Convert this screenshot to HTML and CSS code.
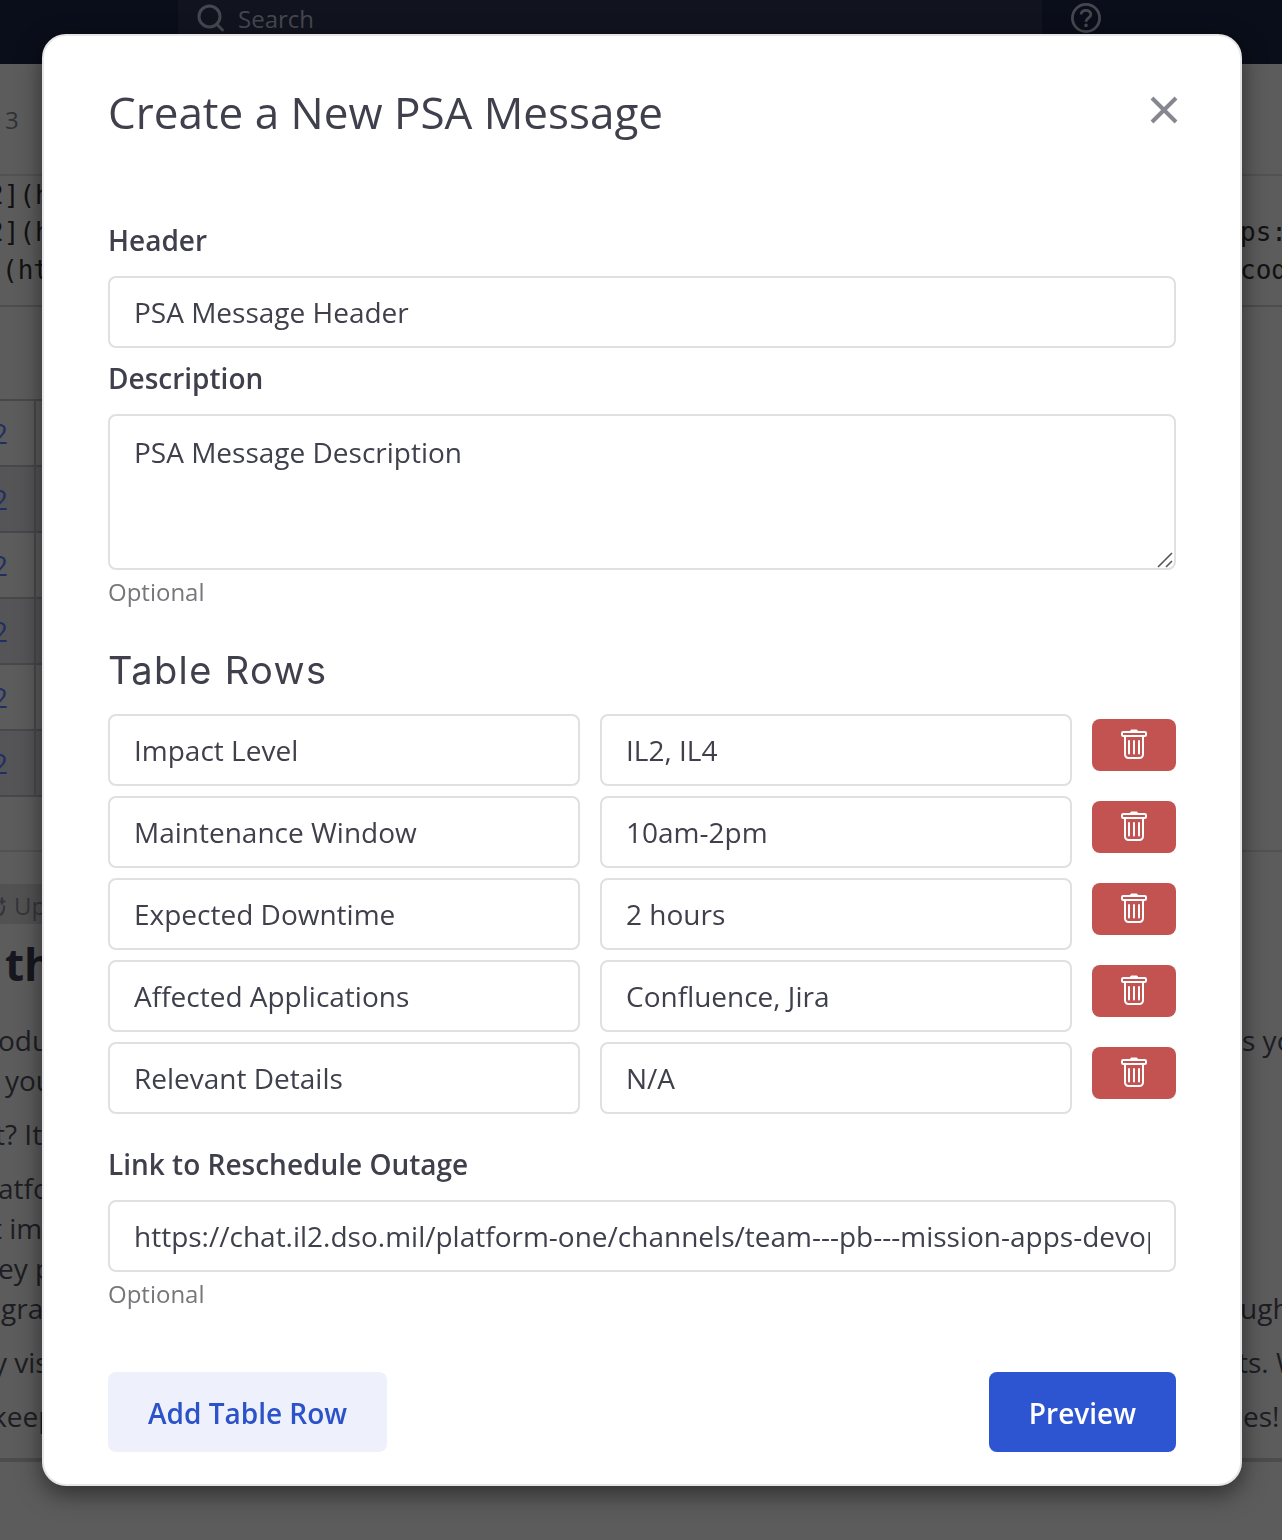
FILE: index.html
```html
<!DOCTYPE html>
<html lang="en">
<head>
    <meta charset="UTF-8">
    <meta name="viewport" content="width=device-width, initial-scale=1.0">
    <title>Create a New PSA Message</title>
    <link rel="stylesheet" href="styles.css">
</head>
<body>
    <div class="page">
        <header class="topbar">
            <div class="search">
                <svg width="30" height="30" viewBox="0 0 30 30" fill="none" stroke="currentColor" stroke-width="3" stroke-linecap="round">
                    <circle cx="12.5" cy="12.5" r="10.5"/>
                    <path d="M20 20.500l5.500 5.500"/>
                </svg>
                <span>Search</span>
            </div>
            <svg class="help" width="32" height="32" viewBox="0 0 32 32" fill="none" stroke="currentColor" stroke-width="2.8">
                <circle cx="16" cy="16" r="13.6"/>
                <path d="M11.2 12.6c0-2.6 2-4.2 4.8-4.2s4.8 1.7 4.8 4.1c0 3.4-4.8 3.3-4.8 7.3"/>
                <circle cx="16" cy="23.4" r="1.8" fill="currentColor" stroke="none"/>
            </svg>
        </header>

        <div class="count">3</div>

        <div class="source">
            <div class="line"><span class="out-12">2](h</span></div>
            <div class="line"><span class="out-12">2](h</span><span class="right">ps:</span></div>
            <div class="line"><span class="in-2">(ht</span><span class="right">cod</span></div>
        </div>

        <div class="table">
            <div class="tr"><a>2</a></div>
            <div class="tr"><a>2</a></div>
            <div class="tr"><a>2</a></div>
            <div class="tr"><a>2</a></div>
            <div class="tr"><a>2</a></div>
            <div class="tr"><a>2</a></div>
        </div>

        <div class="article">
            <div class="update">
                <svg width="12" height="26" viewBox="0 0 12 26" fill="none" stroke="currentColor" stroke-width="2.2">
                    <path d="M0 10.500h5.500M2 6.500v7M4 14.500c.3 4.500-1 8-4 9.500"/>
                </svg>
                <span>Up</span>
            </div>
            <h2>th</h2>
            <div class="text">
                <div class="line"><span class="out-2">odu</span><span class="right in-2">s yo</span></div>
                <div class="line"><span class="in-5">you</span></div>
            </div>
            <div class="text">
                <div class="line"><span class="out-5">t? It</span></div>
            </div>
            <div class="text">
                <div class="line"><span class="out-2">atfo</span></div>
                <div class="line"><span class="out-8">t im</span></div>
                <div class="line"><span class="out-2">ey p</span></div>
                <div class="line"><span class="in-1">gra</span><span class="right">ugh</span></div>
            </div>
            <div class="text">
                <div class="line"><span class="out-7">y vis</span><span class="right out-2">ts. W</span></div>
            </div>
            <div class="text">
                <div class="line"><span class="out-8">keep</span><span class="right in-3">es!</span></div>
            </div>
        </div>
    </div>

    <div class="overlay">
        <div class="modal">
            <div class="modal-header">
                <h1>Create a New PSA Message</h1>
                <svg class="close" width="28" height="28" viewBox="0 0 28 28" fill="none" stroke="currentColor" stroke-width="4">
                    <path d="M2 2l24 24M26 2L2 26"/>
                </svg>
            </div>

            <label for="header">Header</label>
            <input type="text" id="header" value="PSA Message Header">

            <label for="description">Description</label>
            <div class="textarea-wrap">
                <textarea id="description">PSA Message Description</textarea>
                <svg class="grip" width="16" height="16" viewBox="0 0 16 16" fill="none" stroke="#55555a" stroke-width="1.6">
                    <path d="M1 15L15 1M9 15l6-6"/>
                </svg>
            </div>
            <p class="hint">Optional</p>

            <h3>Table Rows</h3>
            <div class="rows" id="rows"></div>

            <label class="link-label" for="link">Link to Reschedule Outage</label>
            <input type="text" id="link" value="https://chat.il2.dso.mil/platform-one/channels/team---pb---mission-apps-devops">
            <p class="hint">Optional</p>

            <div class="actions">
                <button class="btn btn-light">Add Table Row</button>
                <button class="btn btn-primary">Preview</button>
            </div>
        </div>
    </div>

    <script>
        const rows = [
            ['Impact Level', 'IL2, IL4'],
            ['Maintenance Window', '10am-2pm'],
            ['Expected Downtime', '2 hours'],
            ['Affected Applications', 'Confluence, Jira'],
            ['Relevant Details', 'N/A'],
        ];

        document.getElementById('rows').innerHTML = rows.map(([name, value]) => `
            <div class="row">
                <input type="text" value="${name}">
                <input type="text" value="${value}">
                <button class="delete" aria-label="Delete row">
                    <svg width="26" height="30" viewBox="0 0 26 30" fill="none" stroke="currentColor" stroke-width="2" stroke-linejoin="round">
                        <path d="M9 2.500c0-1.500 1-2 2-2h4c1 0 2 .5 2 2z" fill="currentColor" stroke="none"/>
                        <rect x="1" y="3" width="24" height="4" rx="1.200"/>
                        <path d="M4 7v18.500a3.500 3.500 0 0 0 3.500 3.500h11a3.500 3.500 0 0 0 3.500-3.500V7"/>
                        <path d="M8 12v12.500M13 12v12.500M18 12v12.500" stroke-linecap="round"/>
                    </svg>
                </button>
            </div>`).join('');
    </script>
</body>
</html>
```
FILE: styles.css
```css
* {
    box-sizing: border-box;
}

body {
    margin: 0;
    height: 1540px;
    overflow: hidden;
    font-family: "Open Sans", "Noto Sans", sans-serif;
    font-size: 28px;
    color: #40404d;
    background: #5c5c5c;
}

h1, h2, h3, p {
    margin: 0;
    font-weight: 400;
}

/* Page behind the modal */
.page {
    height: 1540px;
    color: #1d1d23;
}

.topbar {
    display: flex;
    height: 64px;
    padding-left: 178px;
    background: #0a0e1a;
    color: #45474e;
}

.search {
    display: flex;
    gap: 11px;
    width: 864px;
    padding: 3px 0 0 19px;
    background: #11141f;
    font-size: 24px;
    line-height: 31px;
}

.search svg {
    margin-top: 1px;
}

.help {
    margin: 2px 0 0 28px;
}

.count {
    height: 112px;
    padding-left: 5px;
    border-bottom: 2px solid #525252;
    font-size: 24px;
    line-height: 112px;
    color: #323235;
}

.source {
    height: 131px;
    padding-top: 1px;
    border-bottom: 2px solid #4d4d50;
    font-family: "DejaVu Sans Mono", monospace;
    font-size: 26px;
    line-height: 37.4px;
    color: #121212;
}

.line {
    display: flex;
    white-space: pre;
}

.line span {
    width: 60px;
}

.line .right {
    width: 42px;
    margin-left: auto;
}

.in-1 {
    text-indent: 1px;
}

.in-2 {
    text-indent: 2px;
}

.in-3 {
    text-indent: 3px;
}

.in-5 {
    text-indent: 5px;
}

.out-2 {
    text-indent: -2px;
}

.out-5 {
    text-indent: -5px;
}

.out-7 {
    text-indent: -7px;
}

.out-8 {
    text-indent: -8px;
}

.out-12 {
    text-indent: -12px;
}

.table {
    width: 200px;
    margin-top: 92px;
    border-top: 2px solid #48484b;
}

.tr {
    height: 66px;
    border-bottom: 2px solid #48484b;
    line-height: 64px;
}

.tr:nth-child(even) {
    background: #555558;
}

.tr a {
    display: block;
    width: 36px;
    border-right: 2px solid #48484b;
    text-indent: -8px;
    color: #202f61;
}

.article {
    height: 612px;
    margin-top: 53px;
    padding-top: 32px;
    border-top: 2px solid #525252;
    border-bottom: 4px solid #4c4c4e;
}

.update {
    display: flex;
    align-items: center;
    gap: 2px;
    width: 200px;
    height: 40px;
    background: #525253;
    font-size: 24px;
    color: #35353b;
}

.update span {
    padding-top: 2px;
}

.article h2 {
    height: 96px;
    padding-left: 5px;
    font-size: 44px;
    font-weight: 700;
    line-height: 80px;
    color: #16171f;
}

.text {
    margin-bottom: 14px;
    line-height: 40px;
}

/* Modal */
.overlay {
    position: fixed;
    inset: 0;
    display: flex;
    justify-content: center;
    align-items: flex-start;
    padding-top: 34px;
    padding-left: 2px;
}

.modal {
    width: 1200px;
    height: 1452px;
    padding: 47px 64px 32px;
    background: #fff;
    border: 2px solid #e6e6e8;
    border-radius: 24px;
    box-shadow: 0 8px 24px rgba(0, 0, 0, 0.5);
}

.modal-header {
    display: flex;
    justify-content: space-between;
    height: 137px;
}

h1 {
    font-size: 44px;
    line-height: 58px;
}

.close {
    margin: 13px -2px 0 0;
    color: #868790;
}

label {
    display: block;
    margin-bottom: 16px;
    font-weight: 600;
    line-height: 40px;
}

input,
textarea {
    display: block;
    width: 100%;
    height: 72px;
    margin: 0 0 10px;
    padding: 0 24px;
    border: 2px solid #e0e0e2;
    border-radius: 8px;
    outline: none;
    background: #fff;
    font: inherit;
    color: #40404d;
}

.textarea-wrap {
    position: relative;
    margin-bottom: 6px;
}

textarea {
    height: 156px;
    margin: 0;
    padding: 16px 24px;
    line-height: 40px;
    resize: none;
}

.grip {
    position: absolute;
    right: 3px;
    bottom: 2px;
}

.hint {
    font-size: 24px;
    line-height: 32px;
    color: #77777b;
}

h3 {
    margin: 38px 0 20px;
    font-family: Inter, sans-serif;
    font-size: 38px;
    line-height: 48px;
    letter-spacing: 1.4px;
}

.row {
    display: flex;
    gap: 20px;
    margin-bottom: 10px;
}

.row input {
    width: 472px;
    margin: 0;
}

.delete {
    display: flex;
    justify-content: center;
    width: 84px;
    height: 52px;
    margin-top: 5px;
    padding: 10px 0 0;
    border: none;
    border-radius: 8px;
    background: #c25351;
    color: #fff;
}

.link-label {
    margin-top: 30px;
}

#link {
    margin-bottom: 6px;
}

.actions {
    display: flex;
    justify-content: space-between;
    margin-top: 62px;
}

.btn {
    height: 80px;
    padding: 2px 40px 0;
    border: none;
    border-radius: 8px;
    font: inherit;
    font-weight: 600;
}

.btn-light {
    background: #eef1fb;
    color: #2b52c8;
}

.btn-primary {
    background: #2d55d2;
    color: #fff;
}
```
